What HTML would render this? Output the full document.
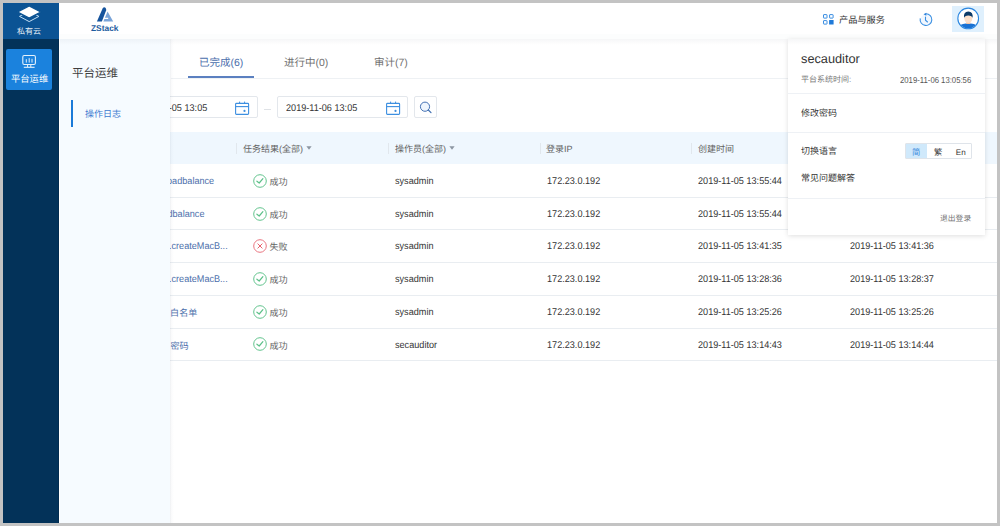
<!DOCTYPE html>
<html lang="zh-CN"><head><meta charset="utf-8">
<style>
*{margin:0;padding:0;box-sizing:border-box}
html,body{width:1000px;height:526px;overflow:hidden;background:#c3c3c3;font-family:"Liberation Sans",sans-serif;color:#333;text-rendering:geometricPrecision}
.frame{position:absolute;left:3px;top:3px;width:994px;height:520px;background:#fff;overflow:hidden}
.inner{position:absolute;left:-3px;top:-3px;width:1000px;height:526px}
.a{position:absolute;white-space:nowrap}
.t9{font-size:9.1px;line-height:12px;color:#333}
.lt{font-size:9.8px;transform:scaleX(.93);transform-origin:0 50%}
.link.lt{transform-origin:100% 50%}
.hdr{left:59px;top:3px;width:938px;height:36px;background:#fff}
.hdrsh{left:59px;top:34px;width:938px;height:5px;background:#fcfdfd}
.topsh{left:59px;top:39px;width:938px;height:6px;background:linear-gradient(rgba(40,60,80,.045),rgba(40,60,80,0))}
.tab{top:55.7px;font-size:10.5px;line-height:14px;color:#707070}
.inp{height:22px;border:1px solid #e3e7ec;border-radius:2px;background:#fff}
.thead{left:59px;top:132px;width:938px;height:32px;background:#eff7fe}
.hl{left:59px;width:938px;height:1px;background:#e9edf1}
.vd{top:143px;width:1px;height:11px;background:#e1e7ed}
.th{top:142.5px;font-size:9px;line-height:12px;color:#626262}
.link{color:#4c6fab}
.status{color:#666}
.card{left:788px;top:39px;width:197px;height:196px;background:#fff;box-shadow:0 1px 5px rgba(0,0,0,.13)}
.panel{left:60px;top:39px;width:110px;height:484px;background:#f6fbff}
.psh{left:170px;top:39px;width:4px;height:484px;background:linear-gradient(90deg,rgba(40,60,90,.075),rgba(40,60,90,.02) 40%,rgba(40,60,90,0))}
.side{left:3px;top:3px;width:56px;height:520px;background:#033259;box-shadow:inset -1px 0 0 #022c50}
</style></head><body>
<div class="frame"><div class="inner">
  <!-- header -->
  <div class="a hdr"></div>
  <div class="a hdrsh"></div>
  <!-- logo -->
  <svg class="a" style="left:94px;top:5px" width="22" height="18" viewBox="0 0 22 18">
    <path d="M2.9 16.4 L8.6 3.4 Q10.1 1.5 11.7 3.1 L12.3 4.9 L7.9 16.4 Z" fill="#15539c"/>
    <path d="M13.6 6.6 L19.2 16.4 L9.4 16.4 L10.4 13.9 L14.2 13.9 L14.2 12.8 L10.9 12.8 Z" fill="#7aa4d8"/>
  </svg>
  <div class="a" style="left:91px;top:22.5px;font-size:8.4px;line-height:10px;font-weight:bold;color:#1d5c9e">ZStack</div>

  <!-- header right -->
  <svg class="a" style="left:822px;top:13px" width="12" height="12" viewBox="0 0 12 12">
    <rect x="1.5" y="1.6" width="3.5" height="3.5" rx="0.4" fill="none" stroke="#3a8ee2" stroke-width="1"/>
    <rect x="7.6" y="1.6" width="3.5" height="3.5" rx="0.4" fill="none" stroke="#3a8ee2" stroke-width="1"/>
    <rect x="1.5" y="7.6" width="3.5" height="3.5" rx="0.4" fill="none" stroke="#3a8ee2" stroke-width="1"/>
    <rect x="7.1" y="7.1" width="4.5" height="4.5" rx="0.3" fill="#1f7ad9"/>
  </svg>
  <div class="a" style="left:839px;top:13.7px;font-size:9.2px;line-height:12px;color:#333">产品与服务</div>
  <svg class="a" style="left:917px;top:11px" width="18" height="17" viewBox="0 0 18 17">
    <circle cx="9" cy="8.6" r="5.4" fill="#f1f7fe"/>
    <path d="M9 2.75 A5.85 5.85 0 1 1 3.25 7.4" fill="none" stroke="#3a8fe2" stroke-width="1.1"/>
    <path d="M6.5 3.2 L9.3 1.7 L9.3 4.7 Z" fill="#2a80dc"/>
    <path d="M8.5 6 L8.5 9.2 L10.5 11" fill="none" stroke="#3a8fe2" stroke-width="1.1" stroke-linecap="round"/>
  </svg>
  <div class="a" style="left:952px;top:6px;width:32px;height:26px;background:#dff0fd"></div>
  <svg class="a" style="left:956px;top:7px" width="24" height="24" viewBox="0 0 24 24">
    <defs><clipPath id="cc"><circle cx="12.2" cy="11.45" r="10"/></clipPath></defs>
    <circle cx="12.2" cy="11.45" r="10.2" fill="#fff"/>
    <g clip-path="url(#cc)">
      <path d="M1 24 Q1.6 17.2 9.6 16.6 L14.8 16.6 Q22.8 17.2 23.4 24 Z" fill="#1a72d3"/>
      <rect x="10.3" y="13.6" width="4" height="3.4" fill="#f3c3a2"/>
      <ellipse cx="12.3" cy="11.6" rx="4" ry="4.3" fill="#fbdfca"/>
      <path d="M8 11 Q7.2 4.8 12.3 4.6 Q17.4 4.8 16.6 11 Q16 8.4 12.3 8.4 Q8.6 8.4 8 11 Z" fill="#0c3a68"/>
    </g>
    <circle cx="12.2" cy="11.45" r="10.35" fill="none" stroke="#2c87e0" stroke-width="1.1"/>
  </svg>

  <!-- tabs -->
  <div class="a tab" style="left:199px;color:#4a6eab">已完成(6)</div>
  <div class="a" style="left:188px;top:76px;width:66px;height:2px;background:#5b80c0"></div>
  <div class="a tab" style="left:284px">进行中(0)</div>
  <div class="a tab" style="left:374px">审计(7)</div>
  <div class="a" style="left:171px;top:78px;width:826px;height:1px;background:#eef1f4"></div>

  <!-- filters -->
  <div class="a inp" style="left:126px;top:96px;width:132px"></div>
  <div class="a t9 lt" style="left:136px;top:103px">2019-11-05 13:05</div>
  <svg class="a" style="left:385px;top:100px" width="16" height="16" viewBox="0 0 16 16"></svg>
  <div class="a" style="left:264px;top:109px;width:7px;height:1px;background:#dfe2e6"></div>
  <div class="a inp" style="left:277px;top:96px;width:131px"></div>
  <div class="a t9 lt" style="left:286px;top:103px">2019-11-06 13:05</div>
  <div class="a inp" style="left:414px;top:96px;width:23px"></div>
  <svg class="a" style="left:234px;top:100px" width="16" height="16" viewBox="0 0 16 16">
    <rect x="1.6" y="3.4" width="13" height="11" rx="0.8" fill="none" stroke="#3d8fe0" stroke-width="1.1"/>
    <line x1="1.6" y1="6.6" x2="14.6" y2="6.6" stroke="#3d8fe0" stroke-width="1.1"/>
    <line x1="5.6" y1="1.6" x2="5.6" y2="3.6" stroke="#3d8fe0" stroke-width="1"/>
    <line x1="10.6" y1="1.6" x2="10.6" y2="3.6" stroke="#3d8fe0" stroke-width="1"/>
    <circle cx="10.5" cy="10.9" r="1.1" fill="#3d8fe0"/>
  </svg>
  <svg class="a" style="left:385px;top:100px" width="16" height="16" viewBox="0 0 16 16">
    <rect x="1.6" y="3.4" width="13" height="11" rx="0.8" fill="none" stroke="#3d8fe0" stroke-width="1.1"/>
    <line x1="1.6" y1="6.6" x2="14.6" y2="6.6" stroke="#3d8fe0" stroke-width="1.1"/>
    <line x1="5.6" y1="1.6" x2="5.6" y2="3.6" stroke="#3d8fe0" stroke-width="1"/>
    <line x1="10.6" y1="1.6" x2="10.6" y2="3.6" stroke="#3d8fe0" stroke-width="1"/>
    <circle cx="10.5" cy="10.9" r="1.1" fill="#3d8fe0"/>
  </svg>
  <svg class="a" style="left:418px;top:100px" width="16" height="16" viewBox="0 0 16 16">
    <circle cx="7" cy="6.7" r="4.6" fill="#eef5fd" stroke="#4673b5" stroke-width="1"/>
    <line x1="10.3" y1="10" x2="13" y2="12.7" stroke="#3f6fb2" stroke-width="1.2" stroke-linecap="round"/>
  </svg>

  <!-- table -->
  <div class="a thead"></div>
  <div class="a vd" style="left:236px"></div>
  <div class="a vd" style="left:388px"></div>
  <div class="a vd" style="left:540px"></div>
  <div class="a vd" style="left:691px"></div>
  <div class="a vd" style="left:843px"></div>
  <div class="a th" style="left:243px">任务结果(全部)</div>
  <svg class="a" style="left:306px;top:145px" width="6" height="6" viewBox="0 0 6 6"><path d="M0.4 1.3 L5.6 1.3 L3 4.8 Z" fill="#8c96a2"/></svg>
  <div class="a th" style="left:395px">操作员(全部)</div>
  <svg class="a" style="left:449px;top:145px" width="6" height="6" viewBox="0 0 6 6"><path d="M0.4 1.3 L5.6 1.3 L3 4.8 Z" fill="#8c96a2"/></svg>
  <div class="a th" style="left:546px">登录IP</div>
  <div class="a th" style="left:698px">创建时间</div>
  <div class="a th" style="left:850px">完成时间</div>

  <div class="a hl" style="top:197px"></div>
  <div class="a hl" style="top:229px"></div>
  <div class="a hl" style="top:262px"></div>
  <div class="a hl" style="top:295px"></div>
  <div class="a hl" style="top:328px"></div>
  <div class="a hl" style="top:360px"></div>

  <div id="rows"><div class="a t9 link lt" style="right:785.8px;top:176.0px">startLoadbalance</div>
<svg class="a" style="left:251.6px;top:172.8px" width="16" height="16" viewBox="0 0 16 16"><circle cx="8" cy="8" r="6.3" fill="none" stroke="#63c48e" stroke-width="1"/><path d="M4.9 8.2 L7.2 10 L10.9 5.6" fill="none" stroke="#5cc088" stroke-width="1.2" stroke-linecap="round" stroke-linejoin="round"/></svg>
<div class="a t9 status" style="left:269.5px;top:176.0px">成功</div>
<div class="a t9 lt" style="left:394.7px;top:176.0px">sysadmin</div>
<div class="a t9 lt" style="left:546.5px;top:176.0px">172.23.0.192</div>
<div class="a t9 lt" style="left:698px;top:176.0px">2019-11-05 13:55:44</div>
<div class="a t9 lt" style="left:850px;top:176.0px">2019-11-05 13:55:45</div>
<div class="a t9 link lt" style="right:795.2px;top:208.7px">addLoadbalance</div>
<svg class="a" style="left:251.6px;top:205.5px" width="16" height="16" viewBox="0 0 16 16"><circle cx="8" cy="8" r="6.3" fill="none" stroke="#63c48e" stroke-width="1"/><path d="M4.9 8.2 L7.2 10 L10.9 5.6" fill="none" stroke="#5cc088" stroke-width="1.2" stroke-linecap="round" stroke-linejoin="round"/></svg>
<div class="a t9 status" style="left:269.5px;top:208.7px">成功</div>
<div class="a t9 lt" style="left:394.7px;top:208.7px">sysadmin</div>
<div class="a t9 lt" style="left:546.5px;top:208.7px">172.23.0.192</div>
<div class="a t9 lt" style="left:698px;top:208.7px">2019-11-05 13:55:44</div>
<div class="a t9 lt" style="left:850px;top:208.7px">2019-11-05 13:55:45</div>
<div class="a t9 link lt" style="right:772.1px;top:241.4px">host.createMacB...</div>
<svg class="a" style="left:251.6px;top:238.2px" width="16" height="16" viewBox="0 0 16 16"><circle cx="8" cy="8" r="6.3" fill="none" stroke="#ea7782" stroke-width="1"/><path d="M5.6 5.6 L10.4 10.4 M10.4 5.6 L5.6 10.4" fill="none" stroke="#e8616d" stroke-width="1"/></svg>
<div class="a t9 status" style="left:269.5px;top:241.4px">失败</div>
<div class="a t9 lt" style="left:394.7px;top:241.4px">sysadmin</div>
<div class="a t9 lt" style="left:546.5px;top:241.4px">172.23.0.192</div>
<div class="a t9 lt" style="left:698px;top:241.4px">2019-11-05 13:41:35</div>
<div class="a t9 lt" style="left:850px;top:241.4px">2019-11-05 13:41:36</div>
<div class="a t9 link lt" style="right:772.1px;top:274.2px">host.createMacB...</div>
<svg class="a" style="left:251.6px;top:271.0px" width="16" height="16" viewBox="0 0 16 16"><circle cx="8" cy="8" r="6.3" fill="none" stroke="#63c48e" stroke-width="1"/><path d="M4.9 8.2 L7.2 10 L10.9 5.6" fill="none" stroke="#5cc088" stroke-width="1.2" stroke-linecap="round" stroke-linejoin="round"/></svg>
<div class="a t9 status" style="left:269.5px;top:274.2px">成功</div>
<div class="a t9 lt" style="left:394.7px;top:274.2px">sysadmin</div>
<div class="a t9 lt" style="left:546.5px;top:274.2px">172.23.0.192</div>
<div class="a t9 lt" style="left:698px;top:274.2px">2019-11-05 13:28:36</div>
<div class="a t9 lt" style="left:850px;top:274.2px">2019-11-05 13:28:37</div>
<div class="a t9 link " style="right:802.6px;top:306.9px">白名单</div>
<svg class="a" style="left:251.6px;top:303.7px" width="16" height="16" viewBox="0 0 16 16"><circle cx="8" cy="8" r="6.3" fill="none" stroke="#63c48e" stroke-width="1"/><path d="M4.9 8.2 L7.2 10 L10.9 5.6" fill="none" stroke="#5cc088" stroke-width="1.2" stroke-linecap="round" stroke-linejoin="round"/></svg>
<div class="a t9 status" style="left:269.5px;top:306.9px">成功</div>
<div class="a t9 lt" style="left:394.7px;top:306.9px">sysadmin</div>
<div class="a t9 lt" style="left:546.5px;top:306.9px">172.23.0.192</div>
<div class="a t9 lt" style="left:698px;top:306.9px">2019-11-05 13:25:26</div>
<div class="a t9 lt" style="left:850px;top:306.9px">2019-11-05 13:25:26</div>
<div class="a t9 link " style="right:811.4px;top:339.6px">密码</div>
<svg class="a" style="left:251.6px;top:336.4px" width="16" height="16" viewBox="0 0 16 16"><circle cx="8" cy="8" r="6.3" fill="none" stroke="#63c48e" stroke-width="1"/><path d="M4.9 8.2 L7.2 10 L10.9 5.6" fill="none" stroke="#5cc088" stroke-width="1.2" stroke-linecap="round" stroke-linejoin="round"/></svg>
<div class="a t9 status" style="left:269.5px;top:339.6px">成功</div>
<div class="a t9 lt" style="left:394.7px;top:339.6px">secauditor</div>
<div class="a t9 lt" style="left:546.5px;top:339.6px">172.23.0.192</div>
<div class="a t9 lt" style="left:698px;top:339.6px">2019-11-05 13:14:43</div>
<div class="a t9 lt" style="left:850px;top:339.6px">2019-11-05 13:14:44</div></div><!--/rows-->

  <!-- card -->
  <div class="a card"></div>
  <div class="a" style="left:801px;top:52px;font-size:12.75px;line-height:14px;color:#333">secauditor</div>
  <div class="a" style="left:801px;top:75px;font-size:8px;line-height:10px;color:#777">平台系统时间:</div>
  <div class="a" style="left:899.5px;top:74.5px;font-size:8.7px;line-height:10px;color:#555;transform:scaleX(.89);transform-origin:0 50%">2019-11-06 13:05:56</div>
  <div class="a" style="left:788px;top:93px;width:197px;height:1px;background:#eef1f5"></div>
  <div class="a" style="left:801px;top:107px;font-size:9px;line-height:12px;color:#333">修改密码</div>
  <div class="a" style="left:788px;top:132px;width:197px;height:1px;background:#eef1f5"></div>
  <div class="a" style="left:801px;top:145px;font-size:9px;line-height:12px;color:#333">切换语言</div>
  <div class="a" style="left:905px;top:143px;width:67px;height:16px;border:1px solid #dfe4ea;border-radius:1px;background:#fff"></div>
  <div class="a" style="left:906px;top:144px;width:21px;height:14px;background:#d0e9fb"></div>
  <div class="a" style="left:912px;top:146px;font-size:8.3px;line-height:12px;color:#3a88dc">简</div>
  <div class="a" style="left:934px;top:146px;font-size:8.3px;line-height:12px;color:#333">繁</div>
  <div class="a" style="left:955.8px;top:146.5px;font-size:8.1px;line-height:12px;color:#333">En</div>
  <div class="a" style="left:801px;top:172px;font-size:9px;line-height:12px;color:#333">常见问题解答</div>
  <div class="a" style="left:788px;top:198px;width:197px;height:1px;background:#eef1f5"></div>
  <div class="a" style="left:940px;top:214px;font-size:7.8px;line-height:10px;color:#777">退出登录</div>

  <!-- panel -->
  <div class="a panel"></div>
  <div class="a psh"></div>
  <div class="a topsh"></div>
  <div class="a" style="left:72px;top:67px;font-size:11.5px;line-height:14px;color:#3e3e3e">平台运维</div>
  <div class="a" style="left:71px;top:100px;width:2px;height:27px;background:#1a7ad8"></div>
  <div class="a" style="left:85px;top:108px;font-size:9px;line-height:12px;color:#3d7ad0">操作日志</div>

  <!-- sidebar -->
  <div class="a side"></div>
  <div class="a" style="left:3px;top:3px;width:56px;height:36px;background:#0b5394"></div>
  <div class="a" style="left:59px;top:3px;width:1px;height:520px;background:#fff"></div>
  <svg class="a" style="left:18px;top:5px;overflow:visible" width="23" height="19" viewBox="0 0 23 19">
    <path d="M1.5 11.4 L11.2 6.2 L20.9 11.4 L11.2 16.6 Z" fill="none" stroke="#c2def4" stroke-width="1"/>
    <path d="M-0.4 7 L11.2 0.8 L22.8 7 L11.2 13.2 Z" fill="#fff" stroke="#0b5394" stroke-width="1.4" stroke-linejoin="round"/>
  </svg>
  <div class="a" style="left:17px;top:27px;font-size:8px;line-height:10px;color:#e8f1f9">私有云</div>
  <div class="a" style="left:6px;top:49px;width:46px;height:41px;background:#1b82dd;border-radius:2px"></div>
  <svg class="a" style="left:20px;top:53px" width="18" height="16" viewBox="0 0 18 16">
    <rect x="2.8" y="2.5" width="12.6" height="9" rx="1.4" fill="none" stroke="#e6f2fc" stroke-width="1.1"/>
    <line x1="6.3" y1="6.2" x2="6.3" y2="9.6" stroke="#e6f2fc" stroke-width="1"/>
    <line x1="9.2" y1="5.2" x2="9.2" y2="9.6" stroke="#e6f2fc" stroke-width="1"/>
    <line x1="12" y1="5.8" x2="12" y2="9.6" stroke="#e6f2fc" stroke-width="1"/>
    <line x1="7.6" y1="11.5" x2="7.6" y2="14" stroke="#e6f2fc" stroke-width="1"/>
    <line x1="10.8" y1="11.5" x2="10.8" y2="14" stroke="#e6f2fc" stroke-width="1"/>
    <line x1="3.8" y1="14.3" x2="14.6" y2="14.3" stroke="#e6f2fc" stroke-width="1.1"/>
  </svg>
  <div class="a" style="left:11px;top:74px;font-size:9.3px;line-height:11px;color:#fff">平台运维</div>
</div></div>
</body></html>
